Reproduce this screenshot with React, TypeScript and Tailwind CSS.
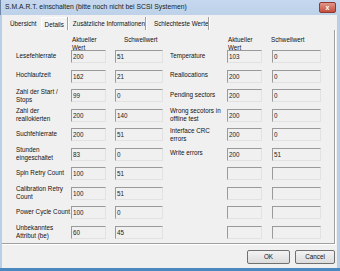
import type { ReactNode } from 'react'

type Row = { label: string[]; cur: string; thr: string }

const leftRows: Row[] = [
  { label: ['Lesefehlerrate'], cur: '200', thr: '51' },
  { label: ['Hochlaufzeit'], cur: '162', thr: '21' },
  { label: ['Zahl der Start /', 'Stops'], cur: '99', thr: '0' },
  { label: ['Zahl der', 'reallokierten'], cur: '200', thr: '140' },
  { label: ['Suchfehlerrate'], cur: '200', thr: '51' },
  { label: ['Stunden', 'eingeschaltet'], cur: '83', thr: '0' },
  { label: ['Spin Retry Count'], cur: '100', thr: '51' },
  { label: ['Calibration Retry', 'Count'], cur: '100', thr: '51' },
  { label: ['Power Cycle Count'], cur: '100', thr: '0' },
  { label: ['Unbekanntes', 'Attribut (be)'], cur: '60', thr: '45' },
]

const rightRows: Row[] = [
  { label: ['Temperature'], cur: '103', thr: '0' },
  { label: ['Reallocations'], cur: '200', thr: '0' },
  { label: ['Pending sectors'], cur: '200', thr: '0' },
  { label: ['Wrong secotors in', 'offline test'], cur: '200', thr: '0' },
  { label: ['Interface CRC', 'errors'], cur: '200', thr: '0' },
  { label: ['Write errors'], cur: '200', thr: '51' },
  { label: [], cur: '', thr: '' },
  { label: [], cur: '', thr: '' },
  { label: [], cur: '', thr: '' },
  { label: [], cur: '', thr: '' },
]

function Field({ value, className }: { value: string; className: string }) {
  return (
    <div className={`h-[13px] shrink-0 border border-t-[#9a9a9a] border-l-[#9a9a9a] border-r-[#e2e2e2] border-b-[#e2e2e2] bg-[#f0f0f0] pl-[1px] leading-[11px] text-[#222] ${className}`}>
      {value}
    </div>
  )
}

function Label({ lines, className }: { lines: string[]; className: string }) {
  const two = lines.length > 1
  return (
    <div className={`shrink-0 whitespace-nowrap leading-[8px] ${two ? 'mt-[-1.5px]' : 'mt-[1.5px]'} ${className}`}>
      {lines.map((l, i) => <div key={i}>{l}</div>)}
    </div>
  )
}

function Tab({ children, active, className = '' }: { children: ReactNode; active?: boolean; className?: string }) {
  return (
    <div className={`h-[13px] whitespace-nowrap pt-[3px] leading-[8px] ${active ? 'border-l border-t border-l-white border-t-white bg-[#f4f4f4] px-[3px]' : ''} ${className}`}>
      {children}
    </div>
  )
}

const Sep = () => <div className="h-[13px] w-[2px] shrink-0 border-l border-l-[#a0a0a0] border-r border-r-white" />

export default function App() {
  return (
    <div className="flex h-[271px] w-[340px] flex-col overflow-hidden bg-[#b9cfe7] text-[6.3px] text-[#111]" style={{ fontFamily: '"Liberation Sans", Arial, sans-serif' }}>
      {/* title bar */}
      <div className="flex h-[15px] items-center border-l border-l-[#6d86a3] bg-gradient-to-b from-[#c6d8ee] to-[#bdd1e9] pl-[4px] pr-[4px]">
        <span className="text-[6.8px] text-[#1b1b1b]">S.M.A.R.T. einschalten (bitte noch nicht bei SCSI Systemen)</span>
        <div className="ml-auto flex h-[11px] w-[17px] items-center justify-center rounded-[2px] border border-[#8e3a30] bg-gradient-to-b from-[#e0968a] to-[#c54e3e] text-[7px] font-bold leading-none text-white">
          x
        </div>
      </div>

      {/* body */}
      <div className="ml-[2px] mr-[3px] flex flex-1 flex-col bg-[#f0f0f0]">
        {/* tabs */}
        <div className="flex h-[15px] items-end">
          <Tab className="ml-[8px]">Übersicht</Tab>
          <Tab active className="ml-[4px]">Details</Tab>
          <Sep />
          <Tab className="ml-[4px]">Zusätzliche Informationen</Tab>
          <Sep />
          <Tab className="ml-[7px]">Schlechteste Werte</Tab>
          <Sep />
        </div>

        {/* panel */}
        <div className="mr-[1px] h-[215px] border-b border-r border-b-white border-r-white">
          <div className="h-[214px] border-b border-r border-b-[#a0a0a0] border-r-[#a0a0a0] pl-[14px] pt-[5.5px]">
            <div className="flex h-[14.5px] leading-[8px]">
              <div className="ml-[56px] w-[52px]">Aktueller<br />Wert</div>
              <div className="w-[104px]">Schwellwert</div>
              <div className="w-[43px]">Aktueller<br />Wert</div>
              <div>Schwellwert</div>
            </div>
            <div className="flex flex-col gap-[6.5px]">
              {leftRows.map((r, i) => {
                const rr = rightRows[i]
                return (
                  <div key={i} className="flex h-[13px]">
                    <Label lines={r.label} className="w-[55px]" />
                    <Field value={r.cur} className="w-[35px]" />
                    <Field value={r.thr} className="ml-[9px] w-[48px]" />
                    <Label lines={rr.label} className="ml-[7px] w-[57px]" />
                    <Field value={rr.cur} className="w-[35px]" />
                    <Field value={rr.thr} className="ml-[10px] w-[49px]" />
                  </div>
                )
              })}
            </div>
          </div>
        </div>

        {/* footer */}
        <div className="flex flex-1 justify-end gap-[5px] pr-[2px] pt-[5px]">
          <button className="h-[14px] w-[43px] rounded-[2px] border border-[#707070] bg-gradient-to-b from-[#f3f3f3] to-[#dcdcdc] leading-[12px] text-[#111]">OK</button>
          <button className="h-[14px] w-[40px] rounded-[2px] border border-[#707070] bg-gradient-to-b from-[#f3f3f3] to-[#dcdcdc] leading-[12px] text-[#111]">Cancel</button>
        </div>
      </div>
      <div className="h-[3px] shrink-0 bg-[#4b88c0]" />
    </div>
  )
}
